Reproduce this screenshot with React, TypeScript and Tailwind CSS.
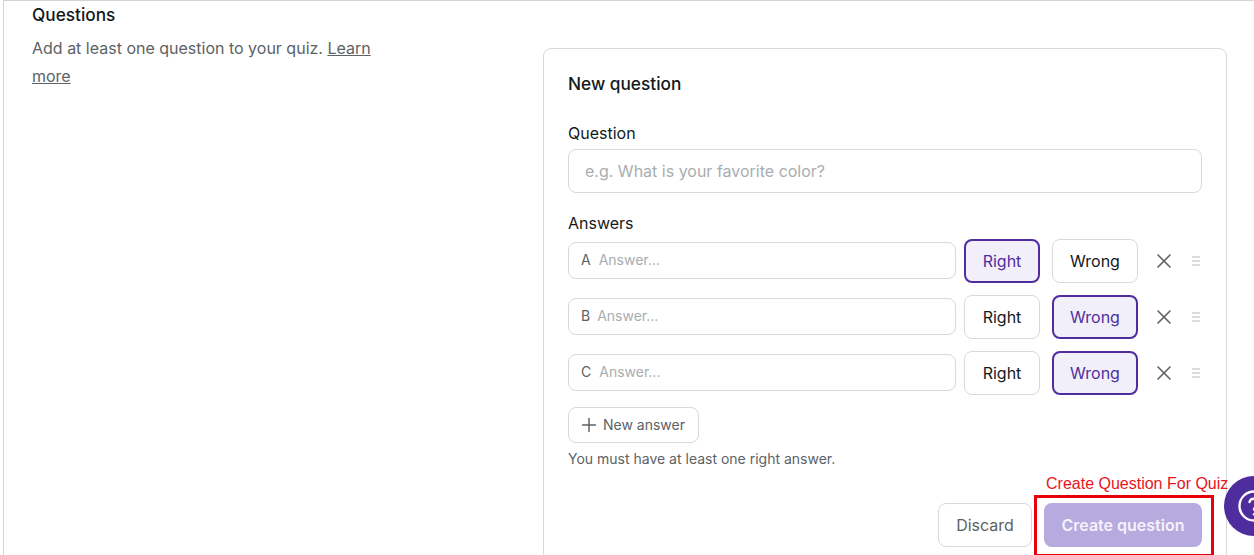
import { Plus, X } from 'lucide-react';

const answers = [
  { letter: 'A', gap: 'ml-[8px]', right: true },
  { letter: 'B', gap: 'ml-[7px]', right: false },
  { letter: 'C', gap: 'ml-[8px]', right: false },
];

function Choice({ label, active, width }: { label: string; active: boolean; width: string }) {
  return (
    <button
      className={`h-[44px] ${width} rounded-lg text-base ${
        active
          ? 'border-2 border-[#4f2d9e] bg-[#f1eff9] text-[#4f2d9e]'
          : 'border border-[#d9d9d9] bg-white text-[#14191c]'
      }`}
    >
      {label}
    </button>
  );
}

export default function App() {
  return (
    <div className="relative h-[555px] w-[1254px] overflow-hidden bg-white font-['Inter',sans-serif]">
      <div className="ml-[3px] flex h-full border-l border-t border-[#d4d4d4]">
        {/* Left column */}
        <div className="w-[539px] shrink-0 pl-[28px]">
          <h2 className="mt-[2px] text-[17.25px] leading-[24px] font-medium text-[#14191c]">Questions</h2>
          <p className="mt-[7px] w-[360px] text-base leading-[28px] text-[#5c6266]">
            Add at least one question to your quiz. <span className="underline">Learn</span>{' '}
            <span className="underline">more</span>
          </p>
        </div>

        {/* New question card */}
        <div className="mt-[47px] h-[560px] w-[684px] shrink-0 rounded-lg border border-[#d9d9d9] px-[24px] pt-[21px]">
          <h3 className="text-[17.25px] leading-[28px] font-medium text-[#14191c]">New question</h3>

          <label className="mt-[23px] block text-base leading-[24px] text-[#14191c]">Question</label>
          <div className="mt-[4px] flex h-[44px] items-center rounded-lg border border-[#d9d9d9] px-[16px] text-base text-[#a9adb0]">
            e.g. What is your favorite color?
          </div>

          <label className="mt-[18px] block text-base leading-[24px] text-[#14191c]">Answers</label>
          <div className="mt-[4px] flex flex-col gap-[12px]">
            {answers.map((a) => (
              <div key={a.letter} className="flex h-[44px] items-start">
                <div className="mt-[3px] flex h-[37px] w-[388px] items-center rounded-lg border border-[#d9d9d9] px-[12px] pb-[2px] text-sm">
                  <span className="text-[#5c6266]">{a.letter}</span>
                  <span className={`${a.gap} text-[#a9adb0]`}>Answer...</span>
                </div>
                <div className="ml-[8px]">
                  <Choice label="Right" active={a.right} width="w-[76px]" />
                </div>
                <div className="ml-[12px]">
                  <Choice label="Wrong" active={!a.right} width="w-[86px]" />
                </div>
                <X className="ml-[14px] mt-[10px] h-[24px] w-[24px] text-[#5c6266]" strokeWidth={1.6} />
                <div className="ml-[16px] mt-[17px] flex w-[8px] flex-col gap-[2px]">
                  <div className="h-[2px] bg-[#dcdcdc]" />
                  <div className="h-[2px] bg-[#dcdcdc]" />
                  <div className="h-[2px] bg-[#dcdcdc]" />
                </div>
              </div>
            ))}
          </div>

          <button className="mt-[12px] flex h-[36px] w-[131px] items-center gap-[3px] rounded-lg border border-[#d9d9d9] pl-[9px] text-sm text-[#5c6266]">
            <Plus className="h-[22px] w-[22px]" strokeWidth={1.6} />
            New answer
          </button>
          <p className="mt-[6px] text-sm leading-[20px] text-[#5c6266]">You must have at least one right answer.</p>

          <div className="mt-[34px] flex justify-end gap-[12px]">
            <button className="h-[44px] w-[94px] rounded-lg border border-[#d9d9d9] text-base text-[#5c6266]">Discard</button>
            <button className="h-[44px] w-[158px] rounded-lg bg-[#b6aadf] text-base font-semibold text-[#f4f2fb]">
              Create question
            </button>
          </div>
        </div>
      </div>

      {/* Annotation over the screenshot */}
      <span className="absolute left-[1046px] top-[475px] font-['Liberation_Sans',sans-serif] text-base leading-[18px] text-[#e8141c]">
        Create Question For Quiz
      </span>
      <div className="absolute left-[1034px] top-[495px] h-[62px] w-[180px] border-[3px] border-[#e8000b]" />

      {/* Help bubble */}
      <div className="absolute left-[1224px] top-[476px] flex h-[60px] w-[60px] items-center rounded-full bg-[#4f2d9e] pl-[13px]">
        <svg viewBox="0 0 34 34" className="h-[34px] w-[34px]" fill="none" stroke="white" strokeWidth="2.4" strokeLinecap="round">
          <circle cx="17" cy="17" r="14.5" />
          <path d="M12.5 13a4.6 4.6 0 0 1 9 1.3c0 3-4.5 3.6-4.5 6.2" />
          <path d="M17 25.2v.1" />
        </svg>
      </div>
    </div>
  );
}
